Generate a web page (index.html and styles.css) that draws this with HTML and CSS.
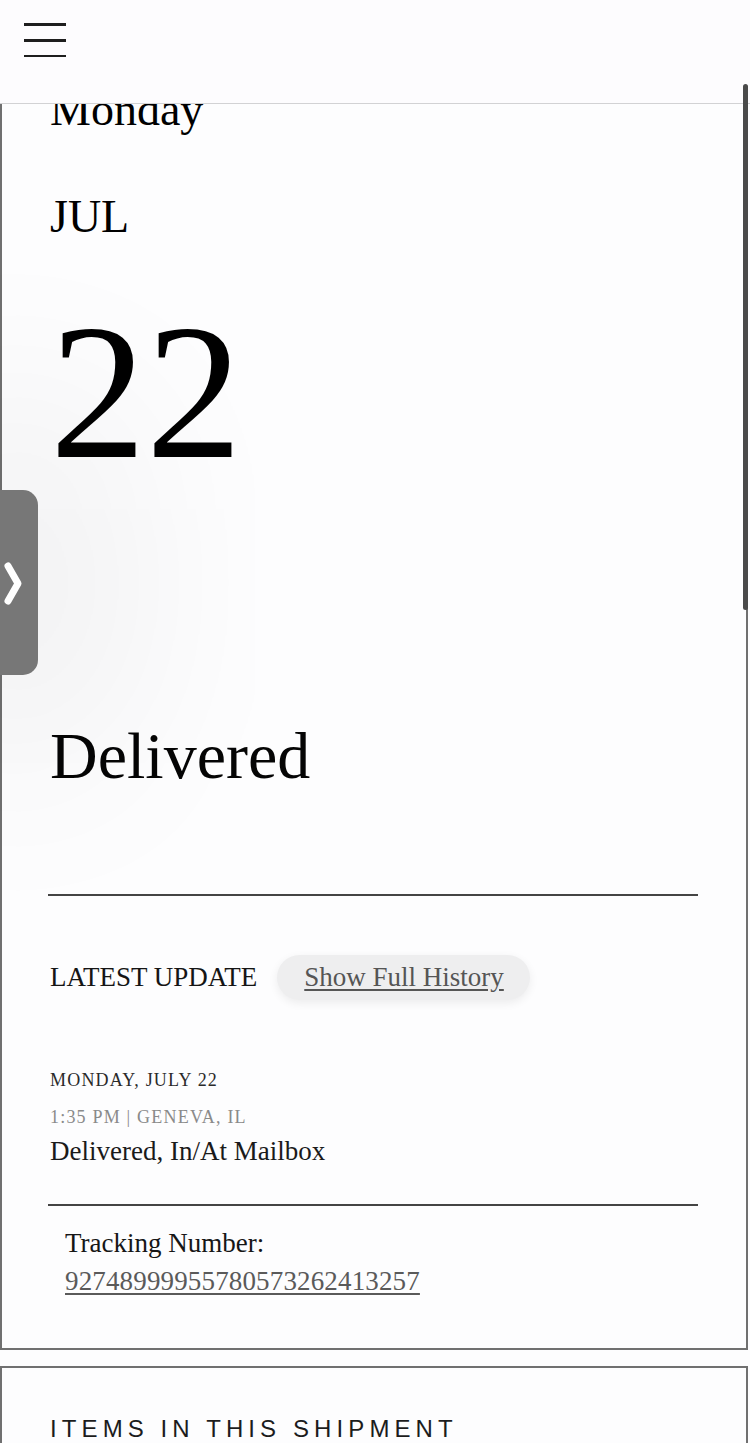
FILE: index.html
```html
<!DOCTYPE html>
<html lang="en">
<head>
<meta charset="utf-8">
<title>Tracking</title>
<link rel="stylesheet" href="styles.css">
</head>
<body>
<header class="topbar">
  <button class="menu-btn" aria-label="Menu">
    <svg width="42" height="36" viewBox="0 0 42 36"><path d="M0 3.5H42M0 19.5H42M0 35.5H42" stroke="#1e1e1e" stroke-width="3"/></svg>
  </button>
</header>

<main class="page">
  <section class="card status-card">
    <div class="weekday">Monday</div>
    <div class="month">JUL</div>
    <div class="day">22</div>
    <h1 class="status">Delivered</h1>
    <hr class="rule rule-first">
    <div class="update-row">
      <span class="update-label">LATEST UPDATE</span>
      <a class="history-pill" href="#">Show Full History</a>
    </div>
    <div class="event-date">MONDAY, JULY 22</div>
    <div class="event-meta">1:35 PM | GENEVA, IL</div>
    <div class="event-desc">Delivered, In/At Mailbox</div>
    <hr class="rule rule-second">
    <div class="tracking">
      <div class="tracking-label">Tracking Number:</div>
      <a class="tracking-number" href="#">92748999955780573262413257</a>
    </div>
  </section>

  <section class="card items-card">
    <h2 class="items-title">ITEMS IN THIS SHIPMENT</h2>
  </section>
</main>

<div class="side-tab" role="button" aria-label="Open">
  <svg class="chev" width="22" height="50" viewBox="0 0 22 50"><polyline points="7,8 17,25.5 7,43" fill="none" stroke="#ffffff" stroke-width="7" stroke-linecap="round" stroke-linejoin="round"/></svg>
</div>
<div class="scroll-thumb"></div>
</body>
</html>
```

FILE: styles.css
```css
html, body {
  margin: 0;
  padding: 0;
  background: #fdfdfe;
}
body {
  font-family: "Liberation Serif", "Times New Roman", serif;
  color: #0d0d0d;
  width: 750px;
  height: 1443px;
  overflow: hidden;
  position: relative;
}

.topbar {
  position: fixed;
  top: 0;
  left: 0;
  right: 0;
  height: 103px;
  background: #fdfcfe;
  border-bottom: 1px solid #d2d2d4;
  z-index: 10;
  display: flex;
  align-items: flex-start;
}
.menu-btn {
  margin: 21px 0 0 24px;
  padding: 0;
  border: 0;
  background: none;
  display: block;
  line-height: 0;
}

.page {
  padding-top: 40px;
}
.card {
  box-sizing: border-box;
  width: 748px;
  border: 2px solid #707070;
  background: transparent;
}
.status-card {
  padding: 41.5px 48px 48px 48px;
}

.weekday,
.month {
  font-size: 46px;
  line-height: 52px;
  color: #000;
}
.month {
  margin-top: 55px;
}
.day {
  font-size: 192px;
  line-height: 192px;
  margin-top: 54.5px;
  color: #000;
}
.status {
  font-size: 66px;
  line-height: 76px;
  font-weight: normal;
  margin: 228.7px 0 0;
  color: #050505;
}

.rule {
  border: 0;
  height: 2px;
  background: #444;
  margin: 0 0 0 -2px;
}
.rule-first {
  margin-top: 100.3px;
}
.rule-second {
  margin-top: 37px;
}

.update-row {
  margin-top: 59px;
  display: flex;
  align-items: center;
  gap: 20px;
  height: 45px;
}
.update-label {
  font-size: 27px;
  line-height: 30px;
  color: #151515;
}
.history-pill {
  display: flex;
  align-items: center;
  height: 45px;
  padding: 0 26px 0 27px;
  border-radius: 23px;
  background: #eeeeef;
  box-shadow: 0 3px 10px rgba(0, 0, 0, 0.07);
  color: #555;
  font-size: 27px;
  text-decoration: underline;
  text-underline-offset: 3px;
}

.event-date {
  margin-top: 69px;
  font-size: 18px;
  line-height: 22px;
  letter-spacing: 1.2px;
  color: #2a2a2a;
}
.event-meta {
  margin-top: 15px;
  font-size: 18px;
  line-height: 22px;
  letter-spacing: 1.2px;
  color: #8a8a8a;
}
.event-desc {
  margin-top: 7px;
  font-size: 27px;
  line-height: 32px;
  color: #1a1a1a;
}

.tracking {
  margin-top: 18px;
  padding-left: 15px;
  font-size: 27px;
  line-height: 38px;
}
.tracking-label {
  color: #161616;
}
.tracking-number {
  color: #5a5a5a;
  text-decoration: underline;
  text-underline-offset: 3px;
  letter-spacing: 0.15px;
}

.items-card {
  margin-top: 16px;
  padding: 46.7px 47px 40px 48px;
  height: 200px;
}
.items-title {
  margin: 0;
  font-family: "Liberation Sans", Arial, sans-serif;
  font-weight: normal;
  font-size: 24px;
  line-height: 28px;
  letter-spacing: 5.1px;
  color: #1c1c1c;
}

.side-tab {
  position: absolute;
  left: 0;
  top: 490px;
  width: 38px;
  height: 185px;
  background: #777;
  border-radius: 0 15px 15px 0;
  box-shadow: 0 0 200px 90px rgba(0, 0, 0, 0.055);
  display: flex;
  align-items: center;
  padding-left: 1px;
  box-sizing: border-box;
  z-index: 5;
}
.chev {
  flex: none;
  display: block;
}
.scroll-thumb {
  position: absolute;
  top: 84px;
  right: 2px;
  width: 5px;
  height: 526px;
  border-radius: 3px;
  background: #4a4a4a;
  z-index: 20;
}
```
